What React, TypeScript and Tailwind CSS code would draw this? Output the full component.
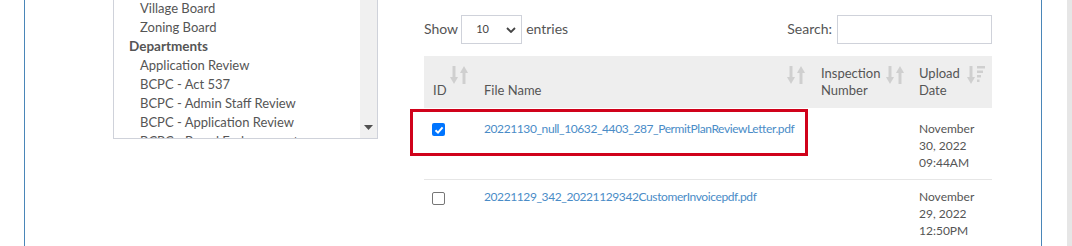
import React from "react";

const font = { fontFamily: "Lato, 'Noto Sans', sans-serif" };

const SortBoth = () => (
  <svg width="18" height="20" viewBox="0 0 18 20" className="shrink-0">
    <rect x="2.5" y="1" width="3" height="12" fill="#cfcfcf" />
    <polygon points="0,12 8,12 4,19" fill="#cfcfcf" />
    <polygon points="10,8 18,8 14,1" fill="#cfcfcf" />
    <rect x="12.5" y="7" width="3" height="12" fill="#cfcfcf" />
  </svg>
);

const SortDesc = () => (
  <svg width="18" height="20" viewBox="0 0 18 20" className="shrink-0">
    <rect x="2.5" y="1" width="3" height="12" fill="#cfcfcf" />
    <polygon points="0,12 8,12 4,19" fill="#cfcfcf" />
    <rect x="10" y="1" width="8" height="2.5" fill="#cfcfcf" />
    <rect x="10" y="5.5" width="6" height="2.5" fill="#cfcfcf" />
    <rect x="10" y="10" width="4" height="2.5" fill="#cfcfcf" />
    <rect x="10" y="14.5" width="2.5" height="2.5" fill="#cfcfcf" />
  </svg>
);

const Check = ({ on }: { on?: boolean }) =>
  on ? (
    <span className="w-[13px] h-[13px] rounded-[2px] bg-[#0075ff] flex items-center justify-center">
      <svg width="10" height="10" viewBox="0 0 10 10">
        <path d="M1.5 5.2 L4 7.6 L8.6 2.4" stroke="white" strokeWidth="2" fill="none" />
      </svg>
    </span>
  ) : (
    <span className="w-[13px] h-[13px] rounded-[2px] border border-[#767676] bg-white block" />
  );

const rows = [
  { on: true, file: "20221130_null_10632_4403_287_PermitPlanReviewLetter.pdf", date: ["November", "30, 2022", "09:44AM"] },
  { on: false, file: "20221129_342_20221129342CustomerInvoicepdf.pdf", date: ["November", "29, 2022", "12:50PM"] },
];

export default function App() {
  return (
    <div className="flex h-[246px] w-[1072px] overflow-hidden bg-white text-[#555]" style={font}>
      <div className="w-[24px] shrink-0" />
      <div className="w-[1018px] shrink-0 border-x border-[#4a86b8] flex">
        {/* left: department list */}
        <div className="ml-[88px] w-[265px] shrink-0">
          <div className="-mt-[24px] h-[163px] border border-[#cfd2da] flex overflow-hidden">
            <div className="flex-1 pt-[3px] text-[13px] leading-[19px]">
              <div className="pl-[26px]">Town Board</div>
              <div className="pl-[26px]">Village Board</div>
              <div className="pl-[26px]">Zoning Board</div>
              <div className="pl-[15px] font-bold text-[13.5px]">Departments</div>
              <div className="pl-[26px]">Application Review</div>
              <div className="pl-[26px]">BCPC - Act 537</div>
              <div className="pl-[26px]">BCPC - Admin Staff Review</div>
              <div className="pl-[26px]">BCPC - Application Review</div>
              <div className="pl-[26px]">BCPC - Board Endorsement</div>
            </div>
            <div className="w-[17px] bg-[#f0f0f0] flex flex-col justify-end items-center pb-[8px]">
              <svg width="9" height="5" viewBox="0 0 9 5">
                <polygon points="0,0 9,0 4.5,5" fill="#505050" />
              </svg>
            </div>
          </div>
        </div>

        {/* right: file table */}
        <div className="ml-[46px] w-[568px] shrink-0 pt-[15px]">
          <div className="flex items-center justify-between h-[29px] text-[14px]">
            <div className="flex items-center">
              <span className="mr-[3px] -mt-[3px]">Show</span>
              <div className="w-[61px] h-[29px] border border-[#cfd2da] flex items-center justify-between pl-[14px] pr-[5px]">
                <span className="text-[11px] text-[#444]">10</span>
                <svg width="10" height="6" viewBox="0 0 10 6">
                  <path d="M1 1 L5 5 L9 1" stroke="#444" strokeWidth="1.8" fill="none" />
                </svg>
              </div>
              <span className="ml-[4px] -mt-[3px]">entries</span>
            </div>
            <div className="flex items-center">
              <span className="mr-[5px] -mt-[3px]">Search:</span>
              <div className="w-[155px] h-[29px] border border-[#cfd2da]" />
            </div>
          </div>

          <div className="relative mt-[12px]">
            <div className="flex bg-[#eeeeee] h-[52px] text-[13px] leading-[17px]">
              <div className="w-[52px] flex items-end pl-[9px] pb-[9px] relative">
                <span>ID</span>
                <span className="absolute left-[26px] top-[9px]"><SortBoth /></span>
              </div>
              <div className="w-[336px] flex items-end justify-between pl-[8px] pr-[7px] pb-[9px] relative">
                <span>File Name</span>
                <span className="absolute right-[7px] top-[9px]"><SortBoth /></span>
              </div>
              <div className="w-[99px] relative pl-[9px] pt-[9px]">
                <div>Inspection</div>
                <div>Number</div>
                <span className="absolute right-[7px] top-[9px]"><SortBoth /></span>
              </div>
              <div className="w-[81px] relative pl-[8px] pt-[9px]">
                <div>Upload</div>
                <div>Date</div>
                <span className="absolute right-[7px] top-[9px]"><SortDesc /></span>
              </div>
            </div>

            {rows.map((r, i) => (
              <div key={i} className={`flex text-[12px] leading-[17px] ${i > 0 ? "border-t border-[#e6e6e6]" : "h-[71px]"}`}>
                <div className={`w-[52px] pl-[8px] ${i === 0 ? "pt-[15px]" : "pt-[12px]"}`}><Check on={r.on} /></div>
                <div className={`w-[336px] pl-[8px] text-[#4a8cc7] tracking-[-0.4px] ${i === 0 ? "pt-[12px]" : "pt-[8px]"}`}>{r.file}</div>
                <div className="w-[99px]" />
                <div className={`w-[81px] pl-[8px] pb-[12px] ${i === 0 ? "pt-[12px]" : "pt-[8px]"}`}>
                  {r.date.map((d) => <div key={d}>{d}</div>)}
                </div>
              </div>
            ))}

            <div className="absolute left-[-14px] top-[53px] w-[398px] h-[47px] border-[3px] border-[#d0021b]" />
          </div>
        </div>
      </div>
      <div className="w-[25px] shrink-0" />
      <div className="flex-1 bg-[#e6e6e6]" />
    </div>
  );
}
